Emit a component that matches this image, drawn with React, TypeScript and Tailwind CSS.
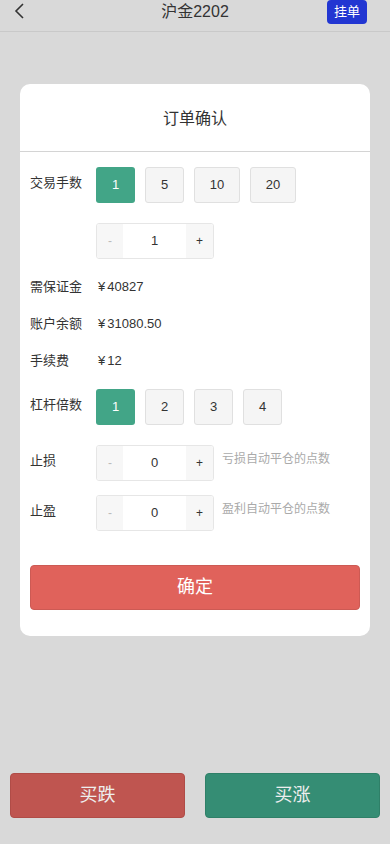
import { useState } from "react";

const font = { fontFamily: '"Liberation Sans", "Noto Sans CJK SC", sans-serif' };

function Stepper({ value }: { value: number }) {
  return (
    <div className="flex h-[36px] w-[118px] overflow-hidden rounded-[3px] border border-[#e6e6e6]">
      <div className="flex w-[26px] items-center justify-center bg-[#f7f7f7] text-[12px] text-[#bbb]">-</div>
      <div className="flex flex-1 items-center justify-center bg-white text-[13px] text-[#333]">{value}</div>
      <div className="flex w-[27px] items-center justify-center bg-[#f7f7f7] text-[12px] text-[#333]">+</div>
    </div>
  );
}

function Choices({ items, widths }: { items: string[]; widths: number[] }) {
  const [active, setActive] = useState(0);
  return (
    <div className="flex gap-[10px]">
      {items.map((t, i) => (
        <button
          key={t}
          onClick={() => setActive(i)}
          style={{ width: widths[i] }}
          className={
            i === active
              ? "h-[36px] rounded-[3px] bg-[#42a587] text-[13px] text-white"
              : "h-[36px] rounded-[3px] border border-[#e0e0e0] bg-[#f5f5f5] text-[13px] text-[#333]"
          }
        >
          {t}
        </button>
      ))}
    </div>
  );
}

function Money({ v }: { v: string }) {
  return (
    <div className="flex">
      <span className="mr-[2px]">¥</span>
      <span>{v}</span>
    </div>
  );
}

export default function App() {
  return (
    <div className="flex min-h-[844px] flex-col bg-[#d9d9d9]" style={font}>
      {/* header */}
      <div className="relative flex h-[32px] items-start justify-center border-b border-[#c9c9c9]">
        <svg className="absolute left-[13px] top-[2px]" width="12" height="18" viewBox="0 0 12 18" fill="none">
          <path d="M10 2 L3 9 L10 16" stroke="#333" strokeWidth="1.6" />
        </svg>
        <div className="pt-[1px] text-[16px] leading-[22px] text-[#333]">沪金2202</div>
        <div className="absolute right-[23px] top-0 flex h-[24px] w-[40px] items-center justify-center rounded-[4px] bg-[#2236d2] text-[13px] text-white">
          挂单
        </div>
      </div>

      {/* card */}
      <div className="mx-[20px] mt-[52px] rounded-[10px] bg-white pb-[26px]">
        <div className="flex h-[68px] items-center justify-center border-b border-[#d4d4d4] pt-[2px] text-[16px] text-[#333]">
          订单确认
        </div>

        <div className="px-[10px] text-[13px] text-[#333]">
          <div className="mt-[15px] flex">
            <div className="w-[66px] pt-[6px]">交易手数</div>
            <Choices items={["1", "5", "10", "20"]} widths={[39, 39, 46, 46]} />
          </div>
          <div className="mt-[20px] flex pl-[66px]">
            <Stepper value={1} />
          </div>
          <div className="mt-[18px] flex h-[20px] items-center">
            <div className="w-[68px]">需保证金</div>
            <Money v="40827" />
          </div>
          <div className="mt-[17px] flex h-[20px] items-center">
            <div className="w-[68px]">账户余额</div>
            <Money v="31080.50" />
          </div>
          <div className="mt-[17px] flex h-[20px] items-center">
            <div className="w-[68px]">手续费</div>
            <Money v="12" />
          </div>
          <div className="mt-[18px] flex">
            <div className="w-[66px] pt-[6px]">杠杆倍数</div>
            <Choices items={["1", "2", "3", "4"]} widths={[39, 39, 39, 39]} />
          </div>
          <div className="mt-[20px] flex">
            <div className="w-[66px] pt-[6px]">止损</div>
            <Stepper value={0} />
            <div className="ml-[8px] pt-[5px] text-[12px] text-[#aaa]">亏损自动平仓的点数</div>
          </div>
          <div className="mt-[14px] flex">
            <div className="w-[66px] pt-[6px]">止盈</div>
            <Stepper value={0} />
            <div className="ml-[8px] pt-[5px] text-[12px] text-[#aaa]">盈利自动平仓的点数</div>
          </div>
          <button className="mt-[34px] flex h-[45px] w-full items-center justify-center rounded-[4px] border border-[#cc5a54] bg-[#e0625b] text-[18px] text-white">
            确定
          </button>
        </div>
      </div>

      {/* bottom */}
      <div className="mt-auto flex gap-[20px] px-[10px] pb-[26px]">
        <button className="flex h-[45px] flex-1 items-center justify-center rounded-[4px] border border-[#b04c47] bg-[#bf5550] text-[18px] text-[#eee]">
          买跌
        </button>
        <button className="flex h-[45px] flex-1 items-center justify-center rounded-[4px] border border-[#2f8068] bg-[#358d74] text-[18px] text-[#eee]">
          买涨
        </button>
      </div>
    </div>
  );
}
